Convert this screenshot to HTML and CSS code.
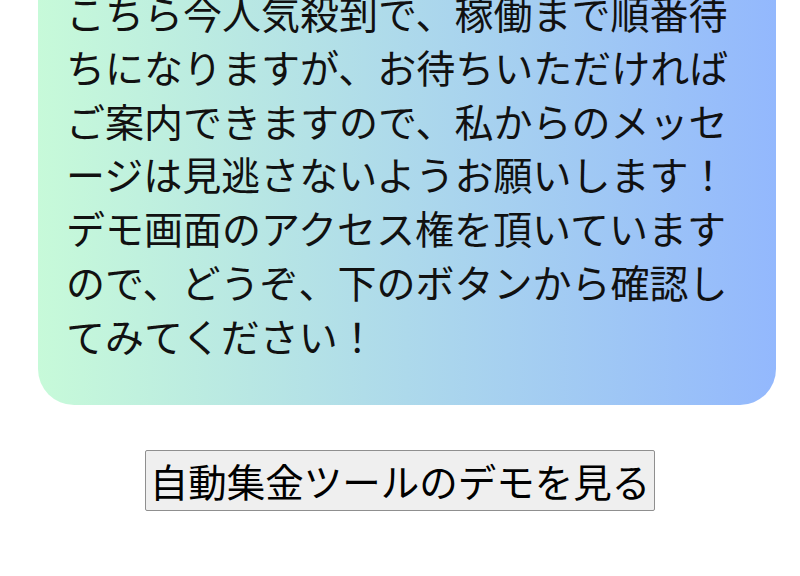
FILE: index.html
```html
<!DOCTYPE html>
<html lang="ja">
<head>
<meta charset="utf-8">
<link rel="stylesheet" href="styles.css">
</head>
<body>
<div class="page">
  <div class="card">
    <p class="message">こちら今人気殺到で、稼働まで順番待ちになりますが、お待ちいただければご案内できますので、私からのメッセージは見逃さないようお願いします！デモ画面のアクセス権を頂いていますので、どうぞ、下のボタンから確認してみてください！</p>
  </div>
  <div class="actions">
    <button class="demo-btn" type="button">自動集金ツールのデモを見る</button>
  </div>
</div>
</body>
</html>
```

FILE: styles.css
```css
html, body {
  margin: 0;
  padding: 0;
  background: #ffffff;
}
body {
  font-family: "Noto Sans CJK JP", "Noto Sans", sans-serif;
  color: #111111;
  overflow: hidden;
}
.page {
  padding: 0 24px 0 38px;
}
.card {
  margin-top: -44px;
  padding: 30px 30px 42px 28px;
  border-radius: 0 0 36px 36px;
  background: linear-gradient(to right, #c7fad9, #93b8fd);
}
.message {
  margin: 0;
  font-size: 39px;
  line-height: 53.8px;
}
.actions {
  display: flex;
  justify-content: center;
  margin-top: 45px;
  margin-left: -14px;
}
.demo-btn {
  font-family: "Noto Sans CJK JP", "Noto Sans", sans-serif;
  font-size: 38.5px;
  line-height: 55px;
  color: #000000;
  background: #efefef;
  border: 1px solid #8f8f8f;
  border-radius: 2px;
  padding: 2px 4px;
}
```
